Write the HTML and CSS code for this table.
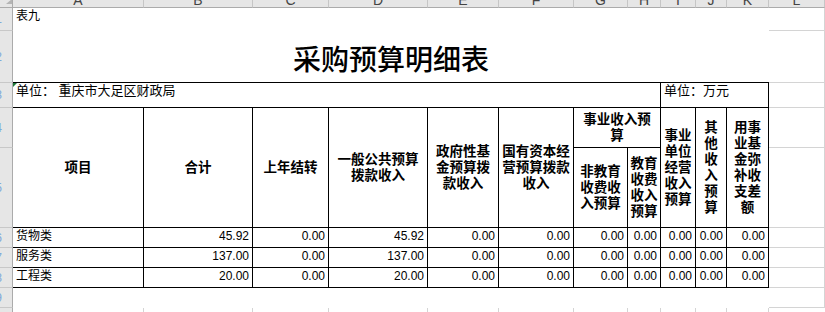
FILE: index.html
```html
<!DOCTYPE html>
<html lang="zh-CN">
<head>
<meta charset="utf-8">
<title>采购预算明细表</title>
<link rel="stylesheet" href="styles.css">
</head>
<body>
<div class="sheet">
  <div class="corner"><svg class="corner-tri" width="8" height="5" viewBox="0 0 8 5"><polygon points="8,0 8,5 2,5" fill="#b4b4b4"/></svg></div>
  <div class="colhd"><span>A</span></div>
  <div class="colhd"><span>B</span></div>
  <div class="colhd"><span>C</span></div>
  <div class="colhd"><span>D</span></div>
  <div class="colhd"><span>E</span></div>
  <div class="colhd"><span>F</span></div>
  <div class="colhd"><span>G</span></div>
  <div class="colhd"><span>H</span></div>
  <div class="colhd"><span>I</span></div>
  <div class="colhd"><span>J</span></div>
  <div class="colhd"><span>K</span></div>
  <div class="colhd"><span>L</span></div>

  <div class="rowhd"><span>1</span></div>
  <div class="top1">表九</div>
  <div class="g"></div>

  <div class="rowhd"><span>2</span></div>
  <div class="title">采购预算明细表</div>
  <div class="g"></div>

  <div class="rowhd"><span>3</span></div>
  <div class="unit unit-l">单位： 重庆市大足区财政局</div>
  <div class="unit unit-r">单位：万元</div>
  <div class="g"></div>

  <div class="rowhd"><span>4</span></div>
  <div class="th rs2"><span>项目</span></div>
  <div class="th rs2"><span>合计</span></div>
  <div class="th rs2"><span>上年结转</span></div>
  <div class="th rs2"><span>一般公共预算<br>拨款收入</span></div>
  <div class="th rs2"><span>政府性基<br>金预算拨<br>款收入</span></div>
  <div class="th rs2"><span>国有资本经<br>营预算拨款<br>收入</span></div>
  <div class="th cs2"><span>事业收入预<br>算</span></div>
  <div class="th rs2"><span>事业<br>单位<br>经营<br>收入<br>预算</span></div>
  <div class="th rs2"><span>其<br>他<br>收<br>入<br>预<br>算</span></div>
  <div class="th rs2"><span>用事<br>业基<br>金弥<br>补收<br>支差<br>额</span></div>
  <div class="g"></div>

  <div class="rowhd"><span>5</span></div>
  <div class="th"><span>非教育<br>收费收<br>入预算</span></div>
  <div class="th"><span>教育<br>收费<br>收入<br>预算</span></div>
  <div class="g"></div>

  <div class="rowhd"><span>6</span></div>
  <div class="td name">货物类</div>
  <div class="td">45.92</div>
  <div class="td">0.00</div>
  <div class="td">45.92</div>
  <div class="td">0.00</div>
  <div class="td">0.00</div>
  <div class="td">0.00</div>
  <div class="td">0.00</div>
  <div class="td">0.00</div>
  <div class="td">0.00</div>
  <div class="td">0.00</div>
  <div class="g"></div>

  <div class="rowhd"><span>7</span></div>
  <div class="td name">服务类</div>
  <div class="td">137.00</div>
  <div class="td">0.00</div>
  <div class="td">137.00</div>
  <div class="td">0.00</div>
  <div class="td">0.00</div>
  <div class="td">0.00</div>
  <div class="td">0.00</div>
  <div class="td">0.00</div>
  <div class="td">0.00</div>
  <div class="td">0.00</div>
  <div class="g"></div>

  <div class="rowhd"><span>8</span></div>
  <div class="td name">工程类</div>
  <div class="td">20.00</div>
  <div class="td">0.00</div>
  <div class="td">20.00</div>
  <div class="td">0.00</div>
  <div class="td">0.00</div>
  <div class="td">0.00</div>
  <div class="td">0.00</div>
  <div class="td">0.00</div>
  <div class="td">0.00</div>
  <div class="td">0.00</div>
  <div class="g"></div>

  <div class="rowhd"><span>9</span></div>
  <div class="blank9"></div>
  <div class="g"></div>

  <div class="rowhd last"><span>10</span></div>
  <div class="g last"></div>
  <div class="g last"></div>
  <div class="g last"></div>
  <div class="g last"></div>
  <div class="g last"></div>
  <div class="g last"></div>
  <div class="g last"></div>
  <div class="g last"></div>
  <div class="g last"></div>
  <div class="g last"></div>
  <div class="g last"></div>
  <div class="g last"></div>
</div>
</body>
</html>
```

FILE: styles.css
```css
html, body {
  margin: 0;
  padding: 0;
  background: #ffffff;
  overflow: hidden;
}

body {
  width: 825px;
  height: 312px;
}

.sheet {
  display: grid;
  grid-template-columns: 13px 131px 109px 76px 99px 71px 75px 54px 33px 35px 31px 42px 56px;
  grid-template-rows: 8px 23px 52px 25px 40px 80px 20px 20px 20px 20px 4px;
  width: 825px;
  height: 312px;
  font-family: "Liberation Sans", "Noto Sans CJK SC", sans-serif;
  color: #000000;
}

.sheet > div {
  box-sizing: border-box;
  overflow: hidden;
  min-width: 0;
  min-height: 0;
}

.corner {
  background: #e6e6e6;
  border-right: 1px solid #ababab;
  border-bottom: 1px solid #ababab;
  display: flex;
  justify-content: flex-end;
  align-items: flex-start;
}

.corner-tri {
  display: block;
  margin-top: -1px;
}

.colhd {
  background: #e6e6e6;
  border-right: 1px solid #c6c6c6;
  border-bottom: 1px solid #ababab;
  text-align: center;
  font-size: 14px;
  color: #444444;
}

.colhd:last-child {
  border-right: none;
}

.colhd span {
  display: block;
  line-height: 14px;
  margin-top: -7.5px;
}

.rowhd {
  background: #e6e6e6;
  border-right: 1px solid #ababab;
  border-bottom: 1px solid #c8c8c8;
  display: flex;
  justify-content: flex-end;
  align-items: center;
  padding-right: 10px;
  font-size: 12px;
  color: #7ea9da;
}

.rowhd.last {
  align-items: flex-start;
  padding-top: 3px;
}

.g {
  border-right: 1px solid #d4d4d4;
  border-bottom: 1px solid #d4d4d4;
}

.g:last-child,
.sheet > .g.last:last-child {
  border-right: none;
}

.sheet > .last {
  border-bottom: none;
}

.top1 {
  grid-column: span 11;
  font-size: 12px;
  line-height: 16px;
  padding-left: 3px;
}

.title {
  grid-column: span 11;
  border-bottom: 1px solid #000000;
  text-align: center;
  font-size: 28px;
  line-height: 36px;
  padding-top: 12px;
  font-weight: 500;
}

.unit {
  border-right: 1px solid #000000;
  border-bottom: 1px solid #000000;
  font-size: 13px;
  line-height: 16px;
  padding-left: 3px;
  white-space: nowrap;
}

.unit-l {
  grid-column: span 8;
  position: relative;
}

.unit-l::before {
  content: "";
  position: absolute;
  left: 0;
  top: 0;
  border-top: 4px solid #1f7a36;
  border-right: 4px solid transparent;
}

.unit-r {
  grid-column: span 3;
}

.th {
  border-right: 1px solid #000000;
  border-bottom: 1px solid #000000;
  display: flex;
  align-items: center;
  justify-content: center;
  text-align: center;
  font-weight: bold;
  font-size: 13.5px;
  line-height: 16px;
  white-space: nowrap;
}

.rs2 {
  grid-row: span 2;
}

.cs2 {
  grid-column: span 2;
}

.td {
  border-right: 1px solid #000000;
  border-bottom: 1px solid #000000;
  display: flex;
  align-items: center;
  justify-content: flex-end;
  font-size: 12px;
  line-height: 16px;
  padding: 0 3px 3px 0;
  white-space: nowrap;
}

.td.name {
  justify-content: flex-start;
  padding-left: 3px;
}

.blank9 {
  grid-column: span 11;
}
```
